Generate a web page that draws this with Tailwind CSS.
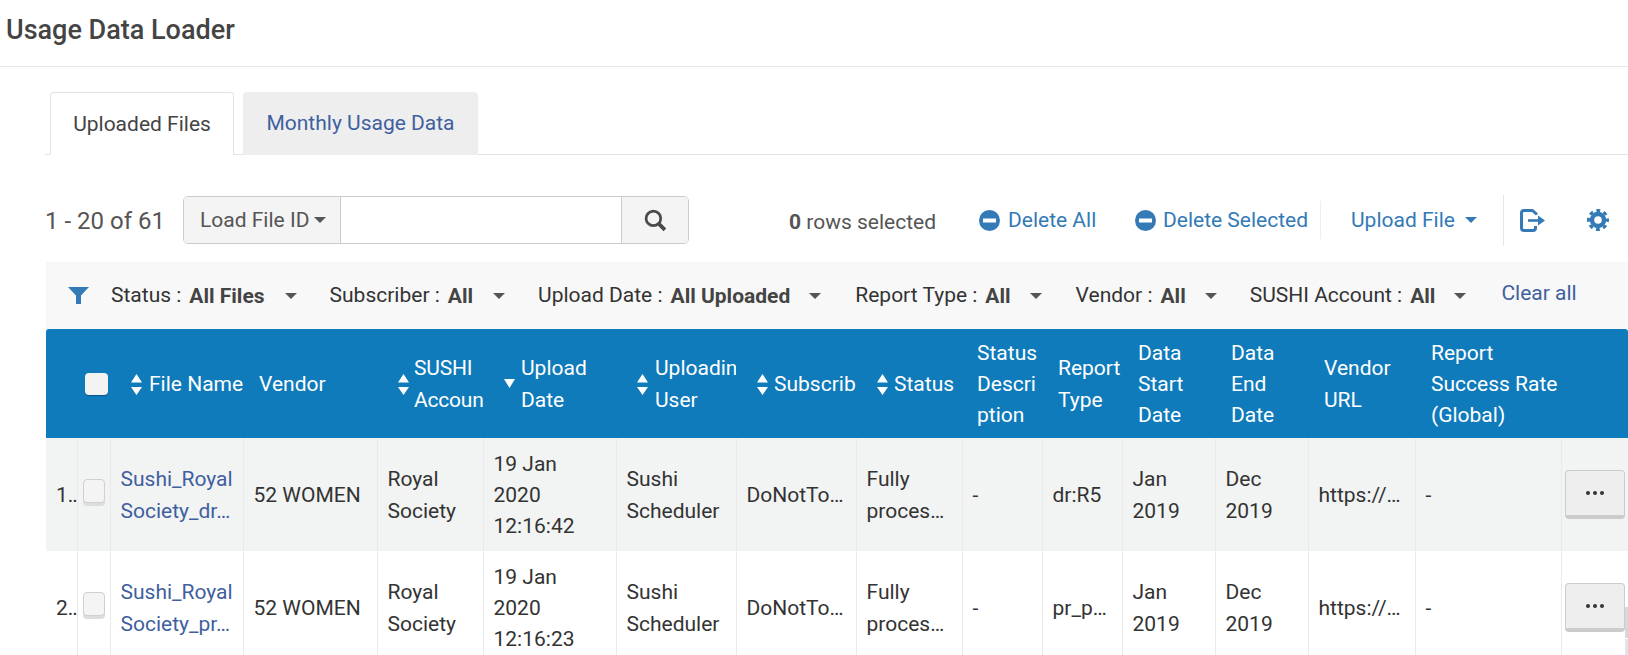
<!DOCTYPE html>
<html lang="en">
<head>
    <meta charset="UTF-8">
    <meta name="viewport" content="width=device-width, initial-scale=1.0">
    <title>Usage Data Loader</title>
    <script src="https://cdn.jsdelivr.net/npm/@tailwindcss/browser@4"></script>
</head>
<body class="bg-white">
<div class="h-[655px] w-[1628px] overflow-hidden font-['Roboto',sans-serif] text-[#333] relative">

    <!-- Page title -->
    <div class="h-[67px] border-b border-[#e6e6e6] pl-[6px] pt-[12px]">
        <h1 class="text-[27px] leading-[36px] font-medium text-[#444]">Usage Data Loader</h1>
    </div>

    <!-- Tabs -->
    <div class="ml-[45px] mt-[25px] h-[63px] border-b border-[#e3e3e3] flex pl-[5px] gap-[9px]">
        <div class="w-[184px] h-[63px] bg-white border border-b-0 border-[#e3e3e3] rounded-t-[4px] text-[21px] text-[#444] flex items-center justify-center pt-[1px]">Uploaded Files</div>
        <div class="w-[235px] h-[63px] bg-[#eee] rounded-t-[4px] text-[21px] text-[#3f5f9f] flex items-center justify-center pt-[1px]">Monthly Usage Data</div>
    </div>

    <!-- Toolbar -->
    <div class="ml-[45px] mt-[41px] h-[48px] flex items-center relative">
        <span class="text-[24px] text-[#555] w-[138px] whitespace-nowrap pt-[2px]">1 - 20 of 61</span>
        <div class="w-[506px] h-[48px] flex border border-[#ccc] rounded-[5px] overflow-hidden">
            <div class="w-[157px] bg-[#f4f4f4] border-r border-[#ccc] flex items-center pl-[16px] text-[21px] text-[#555] whitespace-nowrap">
                <span class="mt-[2px]">Load File ID</span>
                <span class="ml-[5px] w-0 h-0 border-x-[6px] border-x-transparent border-t-[6px] border-t-[#555]"></span>
            </div>
            <div class="flex-1 bg-white"></div>
            <div class="w-[67px] bg-[#f4f4f4] border-l border-[#ccc] flex items-center justify-center">
                <svg width="23" height="23" viewBox="0 0 22 22" fill="none" stroke="#4a4a4a"><circle cx="9" cy="9" r="7" stroke-width="2.6"/><path d="M14 14l6 6" stroke-width="3.6"/></svg>
            </div>
        </div>
        <span class="ml-[100px] text-[21px] text-[#555] mt-[5px] w-[190px] whitespace-nowrap"><b class="font-bold">0</b> rows selected</span>
        <div class="flex items-center gap-[8px] text-[21px] text-[#337ab7] w-[156px] whitespace-nowrap">
            <svg class="shrink-0" width="21" height="21" viewBox="0 0 21 21"><circle cx="10.5" cy="10.5" r="10.5" fill="#337ab7"/><rect x="4" y="8.5" width="13" height="4" fill="#fff"/></svg>
            <span class="mt-[2px]">Delete All</span>
        </div>
        <div class="flex items-center gap-[7px] text-[21px] text-[#337ab7] w-[186px] h-[38px] border-r border-[#eee]">
            <svg class="shrink-0" width="21" height="21" viewBox="0 0 21 21"><circle cx="10.5" cy="10.5" r="10.5" fill="#337ab7"/><rect x="4" y="8.5" width="13" height="4" fill="#fff"/></svg>
            <span class="whitespace-nowrap mt-[2px]">Delete Selected</span>
        </div>
        <div class="flex items-center text-[21px] text-[#337ab7] pl-[30px] w-[183px] h-[51px] border-r border-[#e6e6e6] whitespace-nowrap">
            <span class="mt-[2px]">Upload File</span>
            <span class="ml-[10px] w-0 h-0 border-x-[6px] border-x-transparent border-t-[6px] border-t-[#337ab7]"></span>
        </div>
        <svg class="ml-[16px]" width="25" height="23" viewBox="0 0 25 23" fill="none" stroke="#337ab7" stroke-width="3" stroke-linejoin="round"><path d="M17 5.5L12.5 1.5H4Q1.5 1.5 1.5 4V19Q1.5 21.5 4 21.5H13Q15.5 21.5 15.5 19V17"/><path d="M8 11.5H19" stroke-width="2.6"/><path d="M18 6.5L25 11.5L18 16.5Z" fill="#337ab7" stroke="none"/></svg>
        <svg class="ml-[42px]" width="22" height="22" viewBox="0 0 22 22" fill="none" stroke="#337ab7"><circle cx="11" cy="11" r="6" stroke-width="4.4"/><circle cx="11" cy="11" r="9.5" stroke-width="3" stroke-dasharray="3.9 3.56" stroke-dashoffset="1.95"/></svg>
    </div>

    <!-- Filter bar -->
    <div class="ml-[46px] mt-[18px] h-[67px] bg-[#f8f8f8] flex items-center text-[21px] text-[#333] relative whitespace-nowrap">
        <svg class="ml-[22px] mr-[22px]" width="21" height="17" viewBox="0 0 21 17"><path fill="#337ab7" d="M0 0H21L13 8.5V17H8V8.5Z"/></svg>
        <span>Status :</span><b class="ml-[8px] mt-[2px] font-bold text-[#444]">All Files</b>
        <span class="ml-[20px] mr-[33px] w-0 h-0 border-x-[6px] border-x-transparent border-t-[6px] border-t-[#555]"></span>
        <span>Subscriber :</span><b class="ml-[8px] mt-[2px] font-bold text-[#444]">All</b>
        <span class="ml-[20px] mr-[33px] w-0 h-0 border-x-[6px] border-x-transparent border-t-[6px] border-t-[#555]"></span>
        <span>Upload Date :</span><b class="ml-[8px] mt-[2px] font-bold text-[#444]">All Uploaded</b>
        <span class="ml-[19px] mr-[34px] w-0 h-0 border-x-[6px] border-x-transparent border-t-[6px] border-t-[#555]"></span>
        <span>Report Type :</span><b class="ml-[8px] mt-[2px] font-bold text-[#444]">All</b>
        <span class="ml-[19px] mr-[34px] w-0 h-0 border-x-[6px] border-x-transparent border-t-[6px] border-t-[#555]"></span>
        <span>Vendor :</span><b class="ml-[8px] mt-[2px] font-bold text-[#444]">All</b>
        <span class="ml-[19px] mr-[33px] w-0 h-0 border-x-[6px] border-x-transparent border-t-[6px] border-t-[#555]"></span>
        <span>SUSHI Account :</span><b class="ml-[8px] mt-[2px] font-bold text-[#444]">All</b>
        <span class="ml-[19px] mr-[35px] w-0 h-0 border-x-[6px] border-x-transparent border-t-[6px] border-t-[#555]"></span>
        <span class="text-[#3f5f9f] mb-[3px]">Clear all</span>
    </div>

    <!-- Table -->
    <table class="ml-[46px] w-[1582px] table-fixed border-collapse text-[21px] leading-[31.3px] text-[#333]">
        <colgroup>
            <col class="w-[31px]"><col class="w-[33px]"><col class="w-[133px]"><col class="w-[134px]"><col class="w-[106px]"><col class="w-[133px]"><col class="w-[120px]"><col class="w-[120px]"><col class="w-[106px]"><col class="w-[80px]"><col class="w-[80px]"><col class="w-[93px]"><col class="w-[93px]"><col class="w-[107px]"><col class="w-[146px]"><col class="w-[67px]">
        </colgroup>
        <thead>
            <tr class="h-[109px] bg-[#0f7bbb] text-white text-left font-normal [&>th]:pt-[2px]">
                <th class="rounded-tl-[3px] p-0"></th>
                <th class="p-0 overflow-visible">
                    <span class="ml-[8px] mb-[2px] w-[23px] h-[22px] block bg-[#f3f3f3] rounded-[4px] shadow-[0_1px_1px_rgba(0,0,0,0.3)] relative"></span>
                </th>
                <th class="font-normal p-0 overflow-hidden">
                    <div class="flex items-center pl-[21px] gap-[7px] whitespace-nowrap">
                        <svg class="shrink-0" width="11" height="21" viewBox="0 0 11 21" fill="#fff"><path d="M5.5 0L11 8.5H0ZM0 13H11L5.5 21Z"/></svg>File Name
                    </div>
                </th>
                <th class="font-normal pl-[16px]">Vendor</th>
                <th class="font-normal p-0 overflow-hidden">
                    <div class="flex items-center pl-[21px] gap-[5px] whitespace-nowrap">
                        <svg class="shrink-0" width="11" height="21" viewBox="0 0 11 21" fill="#fff"><path d="M5.5 0L11 8.5H0ZM0 13H11L5.5 21Z"/></svg><span class="tracking-[-0.2px]">SUSHI<br>Accoun</span>
                    </div>
                </th>
                <th class="font-normal p-0 overflow-hidden">
                    <div class="flex items-center pl-[21px] gap-[6px] whitespace-nowrap">
                        <svg class="shrink-0 -mt-[3px]" width="11" height="9" viewBox="0 0 11 9" fill="#fff"><path d="M0 0H11L5.5 9Z"/></svg><span>Upload<br>Date</span>
                    </div>
                </th>
                <th class="font-normal p-0 overflow-hidden">
                    <div class="flex items-center pl-[21px] gap-[7px] whitespace-nowrap">
                        <svg class="shrink-0" width="11" height="21" viewBox="0 0 11 21" fill="#fff"><path d="M5.5 0L11 8.5H0ZM0 13H11L5.5 21Z"/></svg><span>Uploadin<br>User</span>
                    </div>
                </th>
                <th class="font-normal p-0 overflow-hidden">
                    <div class="flex items-center pl-[21px] gap-[6px] whitespace-nowrap">
                        <svg class="shrink-0" width="11" height="21" viewBox="0 0 11 21" fill="#fff"><path d="M5.5 0L11 8.5H0ZM0 13H11L5.5 21Z"/></svg>Subscrib
                    </div>
                </th>
                <th class="font-normal p-0 overflow-hidden">
                    <div class="flex items-center pl-[21px] gap-[6px] whitespace-nowrap">
                        <svg class="shrink-0" width="11" height="21" viewBox="0 0 11 21" fill="#fff"><path d="M5.5 0L11 8.5H0ZM0 13H11L5.5 21Z"/></svg>Status
                    </div>
                </th>
                <th class="font-normal pl-[15px]">Status<br>Descri<br>ption</th>
                <th class="font-normal pl-[16px] overflow-hidden">Report<br>Type</th>
                <th class="font-normal pl-[16px]">Data<br>Start<br>Date</th>
                <th class="font-normal pl-[16px]">Data<br>End<br>Date</th>
                <th class="font-normal pl-[16px]">Vendor<br>URL</th>
                <th class="font-normal pl-[16px] whitespace-nowrap">Report<br>Success Rate<br>(Global)</th>
                <th class="rounded-tr-[3px]"></th>
            </tr>
        </thead>
        <tbody>
            <tr class="h-[113px] bg-[#f2f4f3] [&>td:not(.p-0)]:pt-[2px]">
                <td class="pl-[10px] border-r border-[#eaeaea] whitespace-nowrap overflow-hidden">1<span class="tracking-[-1px]">..</span></td>
                <td class="border-r border-[#eaeaea] p-0">
                    <span class="ml-[5px] mb-[7px] w-[22px] h-[24px] block bg-[#f4f4f4] border border-[#d0d0d0] rounded-[4px] shadow-[0_3px_0_#ddd]"></span>
                </td>
                <td class="pl-[10px] border-r border-[#eaeaea] text-[#3f5f9f]">Sushi_Royal<br>Society_dr…</td>
                <td class="pl-[10px] border-r border-[#eaeaea]">52 WOMEN</td>
                <td class="pl-[10px] border-r border-[#eaeaea]">Royal<br>Society</td>
                <td class="pl-[10px] border-r border-[#eaeaea]">19 Jan<br>2020<br>12:16:42</td>
                <td class="pl-[10px] border-r border-[#eaeaea]">Sushi<br>Scheduler</td>
                <td class="pl-[10px] border-r border-[#eaeaea] whitespace-nowrap">DoNotTo…</td>
                <td class="pl-[10px] border-r border-[#eaeaea]">Fully<br>proces…</td>
                <td class="pl-[10px] border-r border-[#eaeaea]">-</td>
                <td class="pl-[10px] border-r border-[#eaeaea]">dr:R5</td>
                <td class="pl-[10px] border-r border-[#eaeaea]">Jan<br>2019</td>
                <td class="pl-[10px] border-r border-[#eaeaea]">Dec<br>2019</td>
                <td class="pl-[10px] border-r border-[#eaeaea] whitespace-nowrap">https://…</td>
                <td class="pl-[10px] border-r border-[#eaeaea]">-</td>
                <td class="p-0">
                    <div class="ml-[3px] w-[60px] h-[49px] bg-[#eee] border border-[#ccc] border-b-[4px] rounded-[4px] flex items-center justify-center gap-[3px]">
                        <i class="size-[4px] rounded-full bg-[#333]"></i><i class="size-[4px] rounded-full bg-[#333]"></i><i class="size-[4px] rounded-full bg-[#333]"></i>
                    </div>
                </td>
            </tr>
            <tr class="h-[113px] bg-white [&>td:not(.p-0)]:pt-[2px]">
                <td class="pl-[10px] border-r border-[#eaeaea] whitespace-nowrap overflow-hidden">2<span class="tracking-[-1px]">..</span></td>
                <td class="border-r border-[#eaeaea] p-0">
                    <span class="ml-[5px] mb-[7px] w-[22px] h-[24px] block bg-[#f4f4f4] border border-[#d0d0d0] rounded-[4px] shadow-[0_3px_0_#ddd]"></span>
                </td>
                <td class="pl-[10px] border-r border-[#eaeaea] text-[#3f5f9f]">Sushi_Royal<br>Society_pr…</td>
                <td class="pl-[10px] border-r border-[#eaeaea]">52 WOMEN</td>
                <td class="pl-[10px] border-r border-[#eaeaea]">Royal<br>Society</td>
                <td class="pl-[10px] border-r border-[#eaeaea]">19 Jan<br>2020<br>12:16:23</td>
                <td class="pl-[10px] border-r border-[#eaeaea]">Sushi<br>Scheduler</td>
                <td class="pl-[10px] border-r border-[#eaeaea] whitespace-nowrap">DoNotTo…</td>
                <td class="pl-[10px] border-r border-[#eaeaea]">Fully<br>proces…</td>
                <td class="pl-[10px] border-r border-[#eaeaea]">-</td>
                <td class="pl-[10px] border-r border-[#eaeaea]">pr_p…</td>
                <td class="pl-[10px] border-r border-[#eaeaea]">Jan<br>2019</td>
                <td class="pl-[10px] border-r border-[#eaeaea]">Dec<br>2019</td>
                <td class="pl-[10px] border-r border-[#eaeaea] whitespace-nowrap">https://…</td>
                <td class="pl-[10px] border-r border-[#eaeaea]">-</td>
                <td class="p-0">
                    <div class="ml-[3px] w-[60px] h-[49px] bg-[#eee] border border-[#ccc] border-b-[4px] rounded-[4px] flex items-center justify-center gap-[3px]">
                        <i class="size-[4px] rounded-full bg-[#333]"></i><i class="size-[4px] rounded-full bg-[#333]"></i><i class="size-[4px] rounded-full bg-[#333]"></i>
                    </div>
                </td>
            </tr>
        </tbody>
    </table>

    <!-- Scrollbar sliver at the window corner -->
    <div class="absolute right-0 top-[607px] w-[3px] h-[31px] bg-[#d8d8d8]"></div>
    <div class="absolute right-0 top-[639px] w-[3px] h-[16px] bg-[#e4e4e4]"></div>
</div>
</body>
</html>
